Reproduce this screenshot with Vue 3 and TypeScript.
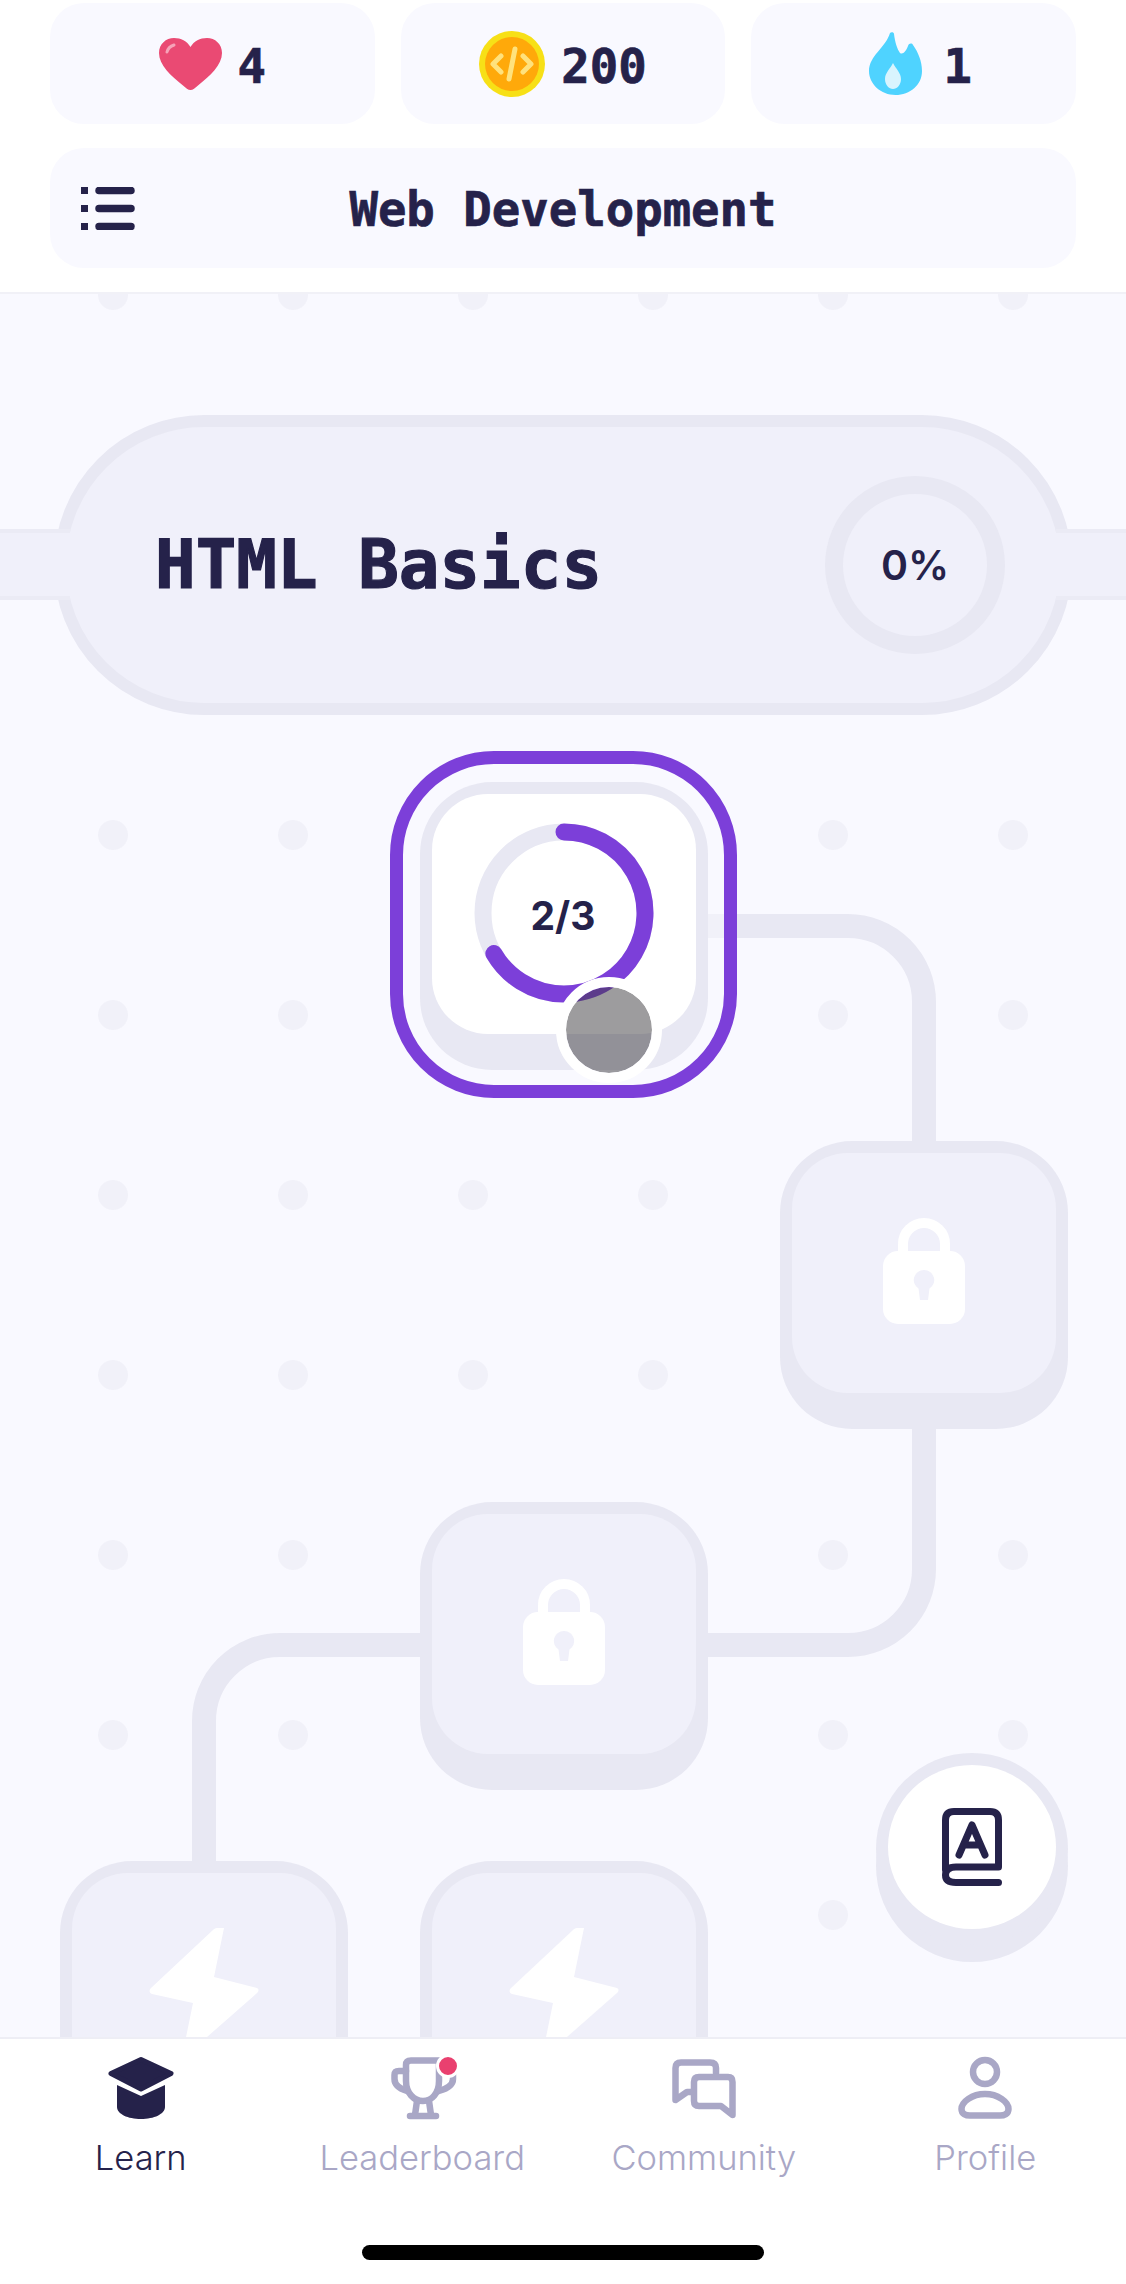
<script setup lang="ts">
interface stat {
  name: string;
  value: string;
}

interface mapNode {
  x: number;
  y: number;
  icon: "lock" | "bolt";
}

const stats: stat[] = [
  { name: "heart", value: "4" },
  { name: "coin", value: "200" },
  { name: "flame", value: "1" },
];

// map coordinates, map starts right under the header
const nodes: mapNode[] = [
  { x: 780, y: 849, icon: "lock" },
  { x: 420, y: 1210, icon: "lock" },
  { x: 60, y: 1569, icon: "bolt" },
  { x: 420, y: 1569, icon: "bolt" },
];

const tabs = ["Learn", "Leaderboard", "Community", "Profile"];
</script>

<template>
  <div class="screen">
    <header class="top">
      <div class="stats">
        <div v-for="item in stats" :key="item.name" class="stat">
          <svg v-if="item.name == 'heart'" width="63" height="52" viewBox="0 0 63 52">
            <path
              d="M31.5 52C29 52 27 50 24 47.500C12 38 0 27 0 15C0 6 7 0 15 0C22 0 28 3 31.500 9C35 3 41 0 48 0C56 0 63 6 63 15C63 27 51 38 39 47.500C36 50 34 52 31.500 52Z"
              fill="#ea4a73"
            />
            <path d="M8 14C9 10 12 8 15 7" fill="none" stroke="#f6a3b8" stroke-width="3" stroke-linecap="round" />
          </svg>
          <svg v-else-if="item.name == 'coin'" width="66" height="66" viewBox="0 0 66 66">
            <circle cx="33" cy="33" r="33" fill="#f7e017" />
            <circle cx="33" cy="33" r="27" fill="#ffa90a" />
            <path
              d="M22 25L14 33L22 41M44 25L52 33L44 41M36 18L30 48"
              fill="none"
              stroke="#ffe27d"
              stroke-width="5"
              stroke-linecap="round"
              stroke-linejoin="round"
            />
          </svg>
          <svg v-else width="53" height="63" viewBox="0 0 53 63">
            <path
              d="M21 1C22 0 25 0 25 2C26 10 28 17 31 21C34 23 37 19 39 14C40 11 43 11 44 13C49 20 53 29 53 39C53 53 41 63 26.500 63C12 63 0 52 0 39C0 24 17 15 21 1Z"
              fill="#4fd3ff"
            />
            <path d="M24 31C27 37 32 41 32 47C32 53 28 57 24 57C20 57 16 53 16 47C16 41 21 37 24 31Z" fill="#d8f4fe" />
          </svg>
          <span class="mono stat-value">{{ item.value }}</span>
        </div>
      </div>
      <div class="course">
        <svg class="menu" width="54" height="43" viewBox="0 0 54 43">
          <path d="M0 0H7V7H0ZM0 18H7V25H0ZM0 36H7V43H0Z" fill="#25224a" />
          <path d="M18 3.500H50M18 21.500H50M18 39.500H50" stroke="#25224a" stroke-width="7.500" stroke-linecap="round" />
        </svg>
        <span class="mono course-title">Web Development</span>
      </div>
    </header>

    <main class="map">
      <div class="dots"></div>

      <section class="band">
        <div class="unit">
          <span class="mono unit-title">HTML Basics</span>
          <div class="unit-ring">0%</div>
        </div>
        <div class="stub stub-left"></div>
        <div class="stub stub-right"></div>
      </section>

      <svg class="paths" width="1126" height="1745" viewBox="0 0 1126 1745">
        <path d="M700 634H848A76 76 0 0 1 924 710V860" />
        <path d="M924 1130V1277A76 76 0 0 1 848 1353H700" />
        <path d="M430 1353H280A76 76 0 0 0 204 1429V1575" />
      </svg>

      <div class="current">
        <div class="node node-done">
          <div class="face">
            <svg class="progress" width="180" height="180" viewBox="0 0 180 180">
              <circle cx="90" cy="90" r="81" fill="none" stroke="#e8e8f3" stroke-width="17" />
              <path
                d="M90 9A81 81 0 1 1 19.850 130.500"
                fill="none"
                stroke="#7c3fd9"
                stroke-width="17"
                stroke-linecap="round"
              />
            </svg>
            <span class="fraction">2/3</span>
          </div>
        </div>
        <div class="avatar"></div>
      </div>

      <div
        v-for="(item, i) in nodes"
        :key="i"
        class="node"
        :style="{ left: item.x + 'px', top: item.y + 'px' }"
      >
        <div class="face">
          <svg v-if="item.icon == 'lock'" class="lock" width="82" height="107" viewBox="0 0 82 107">
            <path d="M20 42V26A21 21 0 0 1 62 26V42" fill="none" stroke="#fff" stroke-width="10" />
            <path
              d="M15 33H67A15 15 0 0 1 82 48V91A15 15 0 0 1 67 106H15A15 15 0 0 1 0 91V48A15 15 0 0 1 15 33ZM41 52A10 10 0 0 0 35.500 70.500L37 82H45L46.500 70.500A10 10 0 0 0 41 52Z"
              fill="#fff"
              fill-rule="evenodd"
            />
          </svg>
          <svg v-else class="bolt" width="110" height="124" viewBox="0 0 110 124">
            <path
              d="M68 0H75L65 49L108 60C110 61 110 63 108 65L41 124H34L44 75L3 66C0 65 0 62 2 60L64 2C65 1 66 0 68 0Z"
              fill="#fff"
            />
          </svg>
        </div>
      </div>

      <button class="glossary">
        <span class="glossary-face">
          <svg width="60" height="78" viewBox="0 0 60 78">
            <path
              d="M3.500 62V12Q3.500 3.500 12 3.500H48Q56.500 3.500 56.500 12V59H14Q3.500 59 3.500 67Q3.500 74.500 14 74.500H56.500M17 47L30 17L43 47M22 37H38"
              fill="none"
              stroke="#25224a"
              stroke-width="7"
              stroke-linecap="round"
              stroke-linejoin="round"
            />
          </svg>
        </span>
      </button>
    </main>

    <nav class="tabs">
      <div class="tab-row">
        <div v-for="(tab, i) in tabs" :key="tab" class="tab" :class="{ active: i == 0 }">
          <svg v-if="i == 0" width="68" height="62" viewBox="0 0 68 62">
            <path d="M34 2.500L64 16.500L34 32L4 16.500Z" fill="#25224a" stroke="#25224a" stroke-width="5" stroke-linejoin="round" />
            <path d="M10 28L34 39L58 28V50C58 57 47 62 34 62C21 62 10 57 10 50Z" fill="#25224a" />
          </svg>
          <svg v-else-if="i == 1" width="68" height="62" viewBox="-3 0 68 62">
            <g fill="none" stroke="#a9a7c6" stroke-width="6.500" stroke-linecap="round" stroke-linejoin="round">
              <path d="M15 24V8Q15 3.500 20 3.500H48V24C48 36 41 44 32 44C23 44 15 36 15 24Z" />
              <path d="M15 14H8Q3.500 14 3.500 18V22Q3.500 30 16 34" />
              <path d="M48 34Q62 30 62 22V16" />
              <path d="M26 44L24 58M38 44L40 58" />
              <path d="M19 59H45" />
            </g>
            <circle cx="57" cy="9" r="10.500" fill="#e9406f" stroke="#fff" stroke-width="3" />
          </svg>
          <svg v-else-if="i == 2" width="64" height="62" viewBox="0 -2 64 62">
            <g fill="none" stroke="#a9a7c6" stroke-width="6.500" stroke-linecap="round" stroke-linejoin="round">
              <path d="M44 14V9Q44 3.500 38 3.500H9Q3.500 3.500 3.500 9V41L15 33H21" />
              <path d="M27 18H56Q60.500 18 60.500 23V56L49 47H27Q22 47 22 42V23Q22 18 27 18Z" />
            </g>
          </svg>
          <svg v-else width="54" height="62" viewBox="0 0 54 62">
            <g fill="none" stroke="#a9a7c6" stroke-width="6.500">
              <circle cx="27" cy="15" r="12" />
              <path d="M27 37C14 37 3.500 45 3.500 52C3.500 57 8 58.500 12 58.500H42C46 58.500 50.500 57 50.500 52C50.500 45 40 37 27 37Z" />
            </g>
          </svg>
          <span>{{ tab }}</span>
        </div>
      </div>
      <div class="home-bar"></div>
    </nav>
  </div>
</template>

<style scoped>
.screen {
  width: 1126px;
  height: 2284px;
  display: flex;
  flex-direction: column;
  overflow: hidden;
  background-color: #ffffff;
  color: #25224a;
  font-family: Inter, "Liberation Sans", sans-serif;
}

.mono {
  font-family: "DejaVu Sans Mono", "Liberation Mono", monospace;
  font-weight: 700;
  font-size: 47.300px;
  line-height: 1;
  -webkit-text-stroke: 0.7px #25224a;
}

.top {
  height: 292px;
  box-sizing: border-box;
  flex-shrink: 0;
  padding: 3px 50px 0;
}

.stats {
  display: grid;
  grid-template-columns: repeat(3, 1fr);
  gap: 26px;
}

.stat {
  height: 121px;
  border-radius: 34px;
  background-color: #f9f9ff;
  display: flex;
  align-items: center;
  justify-content: center;
  gap: 16px;
}

.stat:nth-child(3) {
  gap: 21px;
  padding-left: 14px;
}

.stat-value {
  padding-top: 6px;
}

.course {
  height: 120px;
  margin-top: 24px;
  border-radius: 34px;
  background-color: #f9f9ff;
  display: grid;
  grid-template-columns: 1fr auto 1fr;
  align-items: center;
}

.course-title {
  padding-top: 4px;
}

.menu {
  margin-left: 31px;
}

.map {
  position: relative;
  flex: 1;
  min-height: 0;
  overflow: hidden;
  background-color: #f9f9ff;
}

.map::before {
  content: "";
  position: absolute;
  z-index: 1;
  top: 0;
  left: 0;
  right: 0;
  height: 2px;
  background-color: #f1f1f7;
}

.dots {
  position: absolute;
  inset: 0;
  background-image: radial-gradient(circle at center, #f1f1f9 14.500px, transparent 15.500px);
  background-size: 180px 180px;
  background-position: 23px -87px;
}

.band {
  position: absolute;
  top: 30px;
  left: 0;
  right: 0;
  height: 486px;
  display: flex;
  align-items: center;
  justify-content: center;
  background-color: #f9f9ff;
}

.stub {
  position: absolute;
  top: 207px;
  width: 70px;
  height: 71px;
  box-sizing: border-box;
  background-color: #f0f0fa;
  border-top: 4px solid #ebebf5;
  border-bottom: 4px solid #ebebf5;
}

.stub-left {
  left: 0;
}

.stub-right {
  right: 0;
}

.unit {
  position: relative;
  width: 1018px;
  height: 300px;
  box-sizing: border-box;
  padding: 0 55px 0 89px;
  border: 12px solid #e8e8f3;
  border-radius: 150px;
  background-color: #f0f0fa;
  display: flex;
  align-items: center;
  justify-content: space-between;
}

.unit-title {
  font-size: 67.500px;
  -webkit-text-stroke: 1.200px #25224a;
}

.unit-ring {
  width: 180px;
  height: 178px;
  box-sizing: border-box;
  border: 18px solid #e8e8f3;
  border-radius: 50%;
  display: flex;
  align-items: center;
  justify-content: center;
  font-size: 41px;
  font-weight: 600;
}

.paths {
  position: absolute;
  top: 0;
  left: 0;
}

.paths path {
  fill: none;
  stroke: #e8e8f3;
  stroke-width: 24;
}

.node {
  position: absolute;
  width: 288px;
  height: 288px;
  box-sizing: border-box;
  padding: 12px 12px 36px;
  border-radius: 72px;
  background-color: #e8e8f3;
  display: flex;
}

.face {
  position: relative;
  flex: 1;
  border-radius: 56px;
  background-color: #f0f0fa;
  display: flex;
  align-items: center;
  justify-content: center;
}

.current {
  position: absolute;
  left: 390px;
  top: 459px;
  width: 347px;
  height: 347px;
  box-sizing: border-box;
  border: 13px solid #7c3fd9;
  border-radius: 104px;
  background-color: rgba(249, 249, 255, 0.5);
}

.node-done {
  left: 17px;
  top: 18px;
}

.node-done .face {
  background-color: #ffffff;
}

.progress {
  position: absolute;
  left: 42px;
  top: 29px;
}

.fraction {
  position: relative;
  top: 1px;
  left: -1px;
  font-size: 39px;
  font-weight: 700;
}

.avatar {
  position: absolute;
  left: 153px;
  top: 213px;
  width: 106px;
  height: 106px;
  box-sizing: border-box;
  border: 10px solid #ffffff;
  border-radius: 50%;
  background-color: rgba(60, 58, 62, 0.5);
  background-clip: padding-box;
}

.lock {
  position: relative;
  top: -2px;
}

.bolt {
  position: relative;
  top: -3px;
}

.glossary {
  position: absolute;
  left: 876px;
  top: 1461px;
  width: 192px;
  height: 192px;
  box-sizing: border-box;
  padding: 12px 12px 16px;
  border: none;
  border-radius: 50%;
  background-color: #e8e8f3;
  box-shadow: 0 17px 0 #e8e8f3;
}

.glossary-face {
  width: 168px;
  height: 164px;
  border-radius: 50%;
  background-color: #ffffff;
  display: flex;
  align-items: center;
  justify-content: center;
}

.tabs {
  height: 247px;
  box-sizing: border-box;
  flex-shrink: 0;
  border-top: 2px solid #eeeef5;
  background-color: #ffffff;
  display: flex;
  flex-direction: column;
  align-items: center;
}

.tab-row {
  width: 100%;
  display: grid;
  grid-template-columns: repeat(4, 1fr);
  padding-top: 18px;
}

.tab {
  display: flex;
  flex-direction: column;
  align-items: center;
  gap: 18px;
  height: 136px;
  font-size: 34.500px;
  line-height: 42px;
  font-weight: 300;
  color: #a9a7c6;
}

.tab svg {
  overflow: visible;
}

.active {
  color: #25224a;
}

.home-bar {
  width: 402px;
  height: 15px;
  margin-top: 52px;
  border-radius: 8px;
  background-color: #000000;
}
</style>

<style>
html,
body {
  background-color: #ffffff;
}
</style>
